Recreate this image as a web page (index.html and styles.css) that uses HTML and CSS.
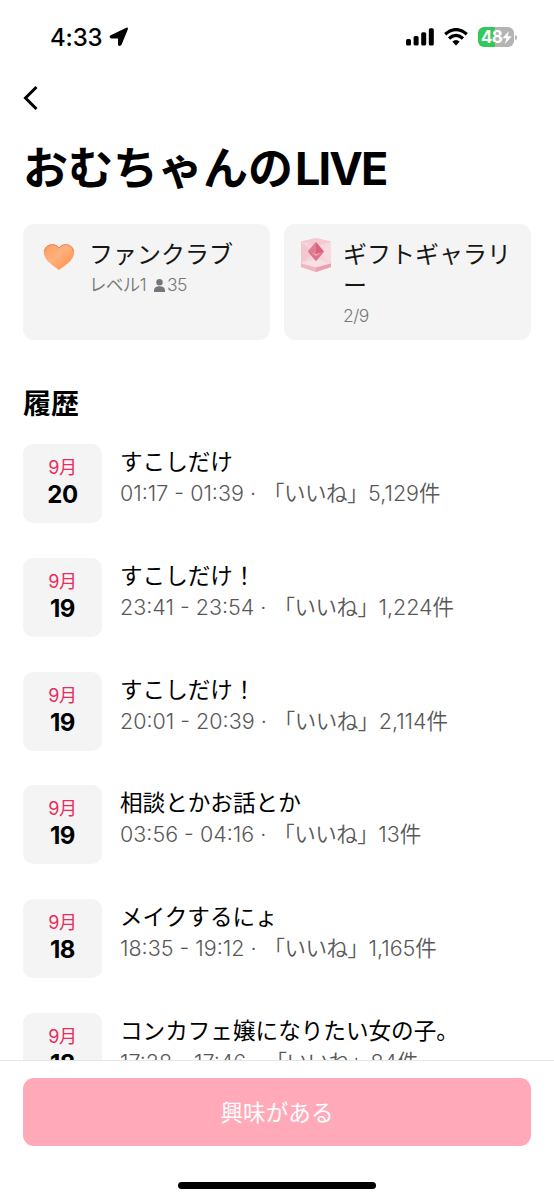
FILE: index.html
```
<!DOCTYPE html>
<html lang="ja">
<head>
    <meta charset="UTF-8">
    <meta name="viewport" content="width=device-width, initial-scale=1.0">
    <title>おむちゃんのLIVE</title>
    <link rel="stylesheet" href="styles.css">
</head>
<body>
<div class="app">
    <div class="status">
        <div class="status-left">
            <span class="time">4:33</span>
            <svg width="20" height="20" viewBox="0 0 20 20"><path d="M1.200 8.600 16.800.9Q19.600-.2 18.700 2.700L12.500 17.800Q11 20 9 18V12.200Q9.200 11.300 8.300 11.500H2.200Q-.2 10.300 1.200 8.600Z"/></svg>
        </div>
        <div class="status-right">
            <svg width="28" height="18" viewBox="0 0 28 18"><rect y="11" width="5" height="6.500" rx="1.600"/><rect x="7.600" y="8" width="5" height="9.500" rx="1.600"/><rect x="15.200" y="4.200" width="5" height="13.300" rx="1.600"/><rect x="22.800" y=".3" width="5" height="17.200" rx="1.600"/></svg>
            <svg class="wifi" width="24" height="18" viewBox="0 0 24 18"><g fill="none" stroke="#000" stroke-width="3.300"><path d="M1.200 6.200Q12-3 22.800 6.200"/><path d="M5 10.400Q12 4.400 19 10.400"/></g><path d="M8.300 13.500Q12 10.500 15.700 13.500L12.500 16.900Q12 17.400 11.500 16.900Z"/></svg>
            <div class="battery">
                <span>48</span>
                <svg width="10" height="13" viewBox="0 0 10 13"><path fill="#fff" d="M7 0 .3 7.300H4.500L2.800 13 9.800 5.300H5.500Z"/></svg>
            </div>
            <i class="battery-cap"></i>
        </div>
    </div>

    <div class="nav">
        <svg width="18" height="26" viewBox="0 0 18 26"><path d="M14.500 2 3.500 13 14.500 24" fill="none" stroke="#000" stroke-width="3"/></svg>
    </div>

    <h1>おむちゃんの<span>LIVE</span></h1>

    <div class="cards">
        <div class="card fan">
            <svg width="32" height="28" viewBox="0 0 32 28">
                <defs>
                    <linearGradient id="heart" x1="0" y1="0" x2="1" y2="1"><stop offset="0" stop-color="#f89c62"/><stop offset=".45" stop-color="#ffb17c"/><stop offset="1" stop-color="#ff8745"/></linearGradient>
                </defs>
                <path d="M16 27C11 23 .8 17.500.8 9.500C.8 1 11.500-1.500 16 4.500C20.500-1.500 31.200 1 31.200 9.500C31.200 17.500 21 23 16 27Z" fill="url(#heart)"/>
                <path d="M1.500 8.500C2 1.500 11.500-1 16 5C20.500-1 30 1.500 30.500 8.500" fill="none" stroke="#e38a58"/>
            </svg>
            <div class="card-text">
                <div class="card-title">ファンクラブ</div>
                <div class="card-sub">レベル1
                    <svg width="11" height="13" viewBox="0 0 11 13"><circle cx="5.500" cy="3.200" r="3.200" fill="#75757a"/><path d="M0 13V11Q.3 7.200 5.500 7.200T11 11V13Z" fill="#75757a"/></svg>35</div>
            </div>
        </div>
        <div class="card gift">
            <svg width="32" height="36" viewBox="0 0 32 36">
                <path d="M1 4.500 16 1 31 4.500V30L16 35 1 30Z" fill="#f7d3da"/>
                <path d="M1 4.500 16 1 31 4.500 16 9Z" fill="#f4c9d2"/>
                <path d="M1 4.500 14 16 1 26Z" fill="#f4c6d0"/>
                <path d="M31 4.500 18 16 31 26Z" fill="#f8dbe1"/>
                <path d="M1 26.500 16 21.500 31 26.500 16 30.500Z" fill="#f9e0e5"/>
                <path d="M1 26.500 16 30.500V35L1 30Z" fill="#f1b4c0"/>
                <path d="M31 26.500 16 30.500V35L31 30Z" fill="#eaa0b0"/>
                <path d="M16 5 24 14.500 16 24 8 14.500Z" fill="#d9627f"/>
                <path d="M8 14.500 16 17 24 14.500 16 24Z" fill="#e0738c"/>
                <path d="M16 5 16 17 8 14.500Z" fill="#e27c93"/>
                <path d="M11 15.500 16 17 21 15.500 16 19Z" fill="#f0a8b4"/>
            </svg>
            <div class="card-text">
                <div class="card-title">ギフトギャラリー</div>
                <div class="card-sub">2/9</div>
            </div>
        </div>
    </div>

    <h2>履歴</h2>

    <div class="list">
        <div class="row">
            <div class="date"><span>9月</span><b>20</b></div>
            <div class="info"><div class="name">すこしだけ</div><div class="meta"><span>01:17 - 01:39 ·</span><span class="like">「いいね」</span><span>5,129件</span></div></div>
        </div>
        <div class="row">
            <div class="date"><span>9月</span><b>19</b></div>
            <div class="info"><div class="name">すこしだけ！</div><div class="meta"><span>23:41 - 23:54 ·</span><span class="like">「いいね」</span><span>1,224件</span></div></div>
        </div>
        <div class="row">
            <div class="date"><span>9月</span><b>19</b></div>
            <div class="info"><div class="name">すこしだけ！</div><div class="meta"><span>20:01 - 20:39 ·</span><span class="like">「いいね」</span><span>2,114件</span></div></div>
        </div>
        <div class="row">
            <div class="date"><span>9月</span><b>19</b></div>
            <div class="info"><div class="name">相談とかお話とか</div><div class="meta"><span>03:56 - 04:16 ·</span><span class="like">「いいね」</span><span>13件</span></div></div>
        </div>
        <div class="row">
            <div class="date"><span>9月</span><b>18</b></div>
            <div class="info"><div class="name">メイクするにょ</div><div class="meta"><span>18:35 - 19:12 ·</span><span class="like">「いいね」</span><span>1,165件</span></div></div>
        </div>
        <div class="row">
            <div class="date"><span>9月</span><b>18</b></div>
            <div class="info"><div class="name">コンカフェ嬢になりたい女の子。</div><div class="meta"><span>17:28 - 17:46 ·</span><span class="like">「いいね」</span><span>84件</span></div></div>
        </div>
    </div>

    <div class="footer">
        <button>興味がある</button>
        <div class="home"></div>
    </div>
</div>
</body>
</html>
```
FILE: styles.css
```
* {
    box-sizing: border-box;
}
body {
    margin: 0;
    background: #fff;
    color: #000;
    font-family: Inter, "Noto Sans CJK JP", sans-serif;
}
svg {
    display: block;
    flex: none;
}
.app {
    height: 1200px;
    overflow: hidden;
    display: flex;
    flex-direction: column;
}

/* status bar */
.status {
    height: 74px;
    padding: 0 37px 0 50px;
    display: flex;
    align-items: center;
    justify-content: space-between;
    flex: none;
}
.status-left, .status-right {
    display: flex;
    align-items: center;
}
.time {
    font-size: 24px;
    font-weight: 500;
    line-height: 30px;
    width: 59px;
    padding-top: 1px;
    letter-spacing: -0.2px;
}
.wifi {
    margin: 0 10px;
}
.battery {
    width: 36px;
    height: 20px;
    border-radius: 6px;
    background: linear-gradient(90deg, #34c759 48%, #b4b4b6 48%);
    display: flex;
    align-items: center;
    padding-left: 3px;
    color: #fff;
    font-size: 17px;
    font-weight: 700;
    letter-spacing: -0.8px;
}
.battery-cap {
    width: 2px;
    height: 5px;
    margin: 0 0 0 1px;
    background: #b4b4b6;
    border-radius: 0 2px 2px 0;
}

.nav {
    height: 62px;
    padding: 11px 0 0 22px;
    flex: none;
}
h1 {
    margin: 0;
    padding: 1px 0 0 23px;
    height: 88px;
    line-height: 64px;
    font-size: 45px;
    font-weight: 700;
    white-space: nowrap;
    flex: none;
}
h1 span {
    margin-left: 2px;
    letter-spacing: -1.9px;
}

/* cards */
.cards {
    display: grid;
    grid-template-columns: 1fr 1fr;
    gap: 14px;
    padding: 0 23px;
    height: 116px;
    flex: none;
}
.card {
    background: #f4f4f4;
    border-radius: 11px;
    display: flex;
    align-items: flex-start;
    padding-top: 15px;
}
.fan {
    padding-left: 20px;
    gap: 14px;
}
.fan > svg {
    margin-top: 4px;
}
.gift {
    padding-left: 16px;
    gap: 11px;
}
.gift > svg {
    margin-top: -2px;
}
.card-title {
    font-size: 24px;
    line-height: 31px;
    color: #161616;
}
.gift .card-text {
    width: 172px;
}
.card-sub {
    display: flex;
    align-items: center;
    font-size: 17.5px;
    font-weight: 350;
    line-height: 30px;
    color: #777;
    letter-spacing: -0.6px;
}
.card-sub svg {
    margin: 0 2px 0 8px;
}

h2 {
    margin: 0;
    padding: 44px 0 0 23px;
    height: 104px;
    line-height: 40px;
    font-size: 28px;
    font-weight: 700;
    flex: none;
}

/* history */
.list {
    flex: 1;
    min-height: 0;
    overflow: hidden;
    padding: 0 23px;
}
.row {
    display: flex;
    gap: 18px;
    height: 113.75px;
}
.date {
    width: 79px;
    height: 79px;
    border-radius: 10px;
    background: #f4f4f4;
    display: flex;
    flex-direction: column;
    align-items: center;
    padding-top: 10px;
}
.date span {
    font-size: 18px;
    line-height: 28px;
    color: #ea2c5c;
    letter-spacing: -0.3px;
}
.date b {
    font-size: 24px;
    line-height: 26px;
    letter-spacing: -0.4px;
}
.info {
    padding-top: 2px;
    white-space: nowrap;
}
.name {
    font-size: 22.6px;
    line-height: 31px;
}
.meta {
    display: flex;
    font-size: 21.5px;
    font-weight: 350;
    line-height: 32px;
    color: #585858;
}
.like {
    margin-left: 7px;
    letter-spacing: -0.5px;
}

.footer {
    height: 140px;
    border-top: 1px solid #e6e6e6;
    padding: 17px 23px 0;
    display: flex;
    flex-direction: column;
    align-items: center;
    flex: none;
    background: #fff;
}
.footer button {
    width: 100%;
    height: 68px;
    border: 0;
    border-radius: 11px;
    background: #ffa9b9;
    color: #fff;
    font: 400 22.6px/68px "Noto Sans CJK JP", sans-serif;
    padding: 0;
}
.home {
    width: 198px;
    height: 7px;
    border-radius: 4px;
    background: #000;
    margin-top: 36px;
}
```
